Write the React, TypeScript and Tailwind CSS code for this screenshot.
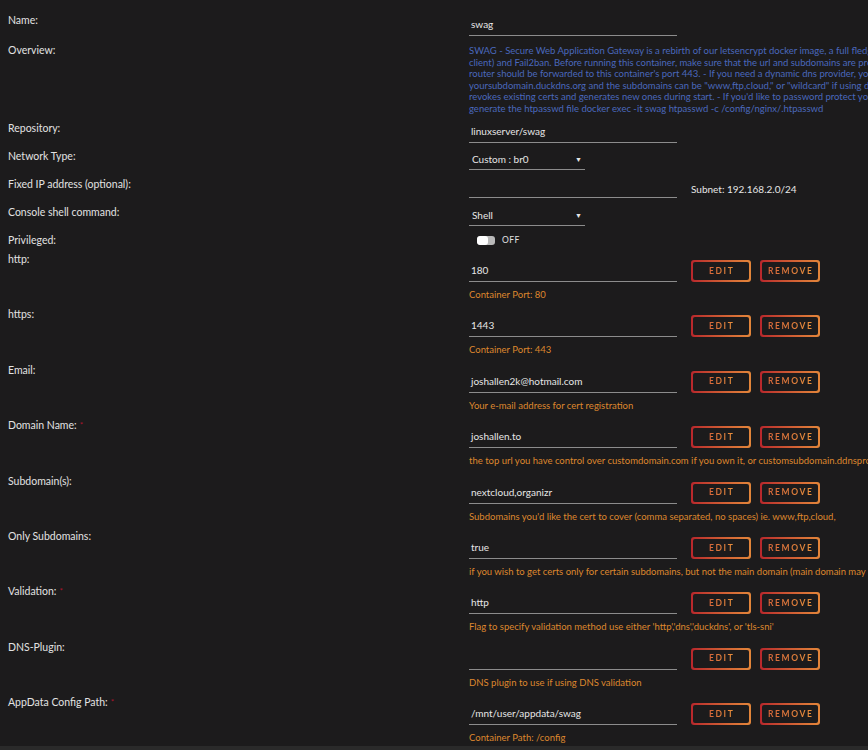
import React from 'react';

const font = { fontFamily: 'Lato, "Open Sans", sans-serif' };

const overviewLines = [
  "SWAG - Secure Web Application Gateway is a rebirth of our letsencrypt docker image, a full fledged web server and reverse proxy with Nginx, Php7, Certbot (Let's Encrypt",
  "client) and Fail2ban. Before running this container, make sure that the url and subdomains are properly forwarded to this container's host, and that port 443 on the",
  "router should be forwarded to this container's port 443. - If you need a dynamic dns provider, you can use the free provider duckdns.org where the url will be",
  'yoursubdomain.duckdns.org and the subdomains can be "www,ftp,cloud," or "wildcard" if using duckdns validation - Note: the container',
  "revokes existing certs and generates new ones during start. - If you'd like to password protect your sites, you can use htpasswd. Run the following command on your host to",
  'generate the htpasswd file docker exec -it swag htpasswd -c /config/nginx/.htpasswd',
];

type ConfigRow = {
  label: string;
  value: string;
  desc: string;
  required?: boolean;
};

const configRows: ConfigRow[] = [
  { label: 'http:', value: '180', desc: 'Container Port: 80' },
  { label: 'https:', value: '1443', desc: 'Container Port: 443' },
  { label: 'Email:', value: 'joshallen2k@hotmail.com', desc: 'Your e-mail address for cert registration' },
  {
    label: 'Domain Name:',
    value: 'joshallen.to',
    desc: 'the top url you have control over customdomain.com if you own it, or customsubdomain.ddnsprovider.com if dynamic dns',
    required: true,
  },
  {
    label: 'Subdomain(s):',
    value: 'nextcloud,organizr',
    desc: "Subdomains you'd like the cert to cover (comma separated, no spaces) ie. www,ftp,cloud,",
  },
  {
    label: 'Only Subdomains:',
    value: 'true',
    desc: 'if you wish to get certs only for certain subdomains, but not the main domain (main domain may be hosted on another machine)',
  },
  {
    label: 'Validation:',
    value: 'http',
    desc: "Flag to specify validation method use either 'http','dns','duckdns', or 'tls-sni'",
    required: true,
  },
  { label: 'DNS-Plugin:', value: '', desc: 'DNS plugin to use if using DNS validation' },
  { label: 'AppData Config Path:', value: '/mnt/user/appdata/swag', desc: 'Container Path: /config', required: true },
];

const Label = ({ text, required }: { text: string; required?: boolean }) => (
  <div className="w-[469px] shrink-0 pl-2 text-[10.5px] leading-[14px] text-[#e2e2e2]">
    {text}
    {required && <span className="ml-[3px] align-top text-[8px] text-[#b0142c]">*</span>}
  </div>
);

const GradButton = ({ text }: { text: string }) => (
  <div className="h-[22px] w-[60px] rounded-[3px] bg-linear-to-r from-[#b8262c] to-[#e3863a] p-[2px]">
    <div className="flex h-full w-full items-center justify-center rounded-[2px] bg-[#1c1b1c]">
      <span className="bg-linear-to-r from-[#d6653a] to-[#e8903c] bg-clip-text pl-[1.5px] text-[8.5px] font-bold tracking-[1.6px] text-transparent">
        {text}
      </span>
    </div>
  </div>
);

const App = () => {
  return (
    <div className="h-[750px] w-full overflow-hidden bg-[#1c1b1c]" style={font}>
      <div className="pt-[13px]">
        {/* Name */}
        <div className="flex h-[30px]">
          <Label text="Name:" />
          <div className="flex h-[23px] w-[208px] items-center border-b border-[#8c8c8c] pl-[2px] text-[10px] text-[#e6e6e6]">
            swag
          </div>
        </div>

        {/* Overview */}
        <div className="flex h-[78px]">
          <Label text="Overview:" />
          <div className="mt-[2px] text-[9.5px] leading-[11.5px] text-[#4a68bc]">
            {overviewLines.map((line) => (
              <div key={line} className="whitespace-nowrap">
                {line}
              </div>
            ))}
          </div>
        </div>

        {/* Repository */}
        <div className="flex h-[28px]">
          <Label text="Repository:" />
          <div className="flex h-[22px] w-[208px] items-center border-b border-[#8c8c8c] pl-[2px] text-[10px] text-[#e6e6e6]">
            linuxserver/swag
          </div>
        </div>

        {/* Network Type */}
        <div className="flex h-[28px]">
          <Label text="Network Type:" />
          <div className="flex h-[21px] w-[116px] items-center justify-between border-b border-[#8c8c8c] pl-[3px] pr-[3px] text-[10px] text-[#e6e6e6]">
            <span>Custom : br0</span>
            <span className="text-[7px]">▼</span>
          </div>
        </div>

        {/* Fixed IP */}
        <div className="flex h-[28px]">
          <Label text="Fixed IP address (optional):" />
          <div className="h-[21px] w-[208px] border-b border-[#8c8c8c]" />
          <div className="ml-[14px] mt-[5px] text-[10px] leading-[14px] text-[#e6e6e6]">Subnet: 192.168.2.0/24</div>
        </div>

        {/* Console */}
        <div className="flex h-[28px]">
          <Label text="Console shell command:" />
          <div className="flex h-[21px] w-[116px] items-center justify-between border-b border-[#8c8c8c] pl-[3px] pr-[3px] text-[10px] text-[#e6e6e6]">
            <span>Shell</span>
            <span className="text-[7px]">▼</span>
          </div>
        </div>

        {/* Privileged */}
        <div className="flex h-[19px]">
          <Label text="Privileged:" />
          <div className="ml-[8px] flex h-[14px] items-center gap-[7px]">
            <div className="flex h-[9px] w-[18px] overflow-hidden rounded-[3px] bg-[#b9b9b9]">
              <div className="h-full w-[11px] rounded-[3px] bg-white" />
            </div>
            <span className="text-[8.5px] tracking-[0.5px] text-[#e0e0e0]">OFF</span>
          </div>
        </div>

        {/* Config rows */}
        {configRows.map((row, i) => (
          <div key={row.label} className={`flex ${i === configRows.length - 1 ? 'h-[51px]' : 'h-[55.4px]'}`}>
            <Label text={row.label} required={row.required} />
            <div className="pt-[8px]">
              <div className="flex items-center">
                <div className="flex h-[22px] w-[208px] items-center border-b border-[#8c8c8c] pl-[2px] text-[10px] text-[#e6e6e6]">
                  {row.value}
                </div>
                <div className="ml-[14px] flex gap-[9px]">
                  <GradButton text="EDIT" />
                  <GradButton text="REMOVE" />
                </div>
              </div>
              <div className="mt-[6px] whitespace-nowrap text-[9.5px] leading-[14px] text-[#de872e]">{row.desc}</div>
            </div>
          </div>
        ))}
      </div>
      <div className="h-[20px] bg-[#2a2a2a]" />
    </div>
  );
};

export default App;
